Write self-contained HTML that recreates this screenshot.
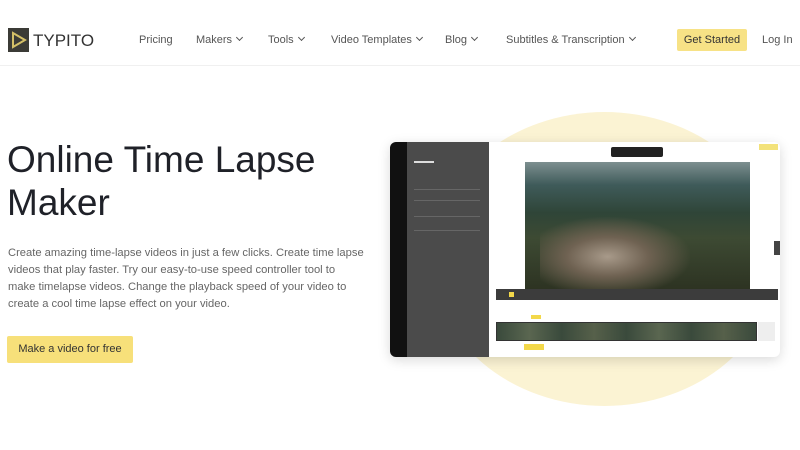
<!DOCTYPE html>
<html><head><meta charset="utf-8"><style>
*{margin:0;padding:0;box-sizing:border-box}
body{width:800px;height:450px;overflow:hidden;background:#fff;font-family:"Liberation Sans",sans-serif;position:relative}
.a{position:absolute}
.nav{font-size:11px;color:#555;top:34px}
.chev{display:inline-block;width:5px;height:5px;border-right:1.3px solid #555;border-bottom:1.3px solid #555;transform:rotate(45deg);margin-left:5px;position:relative;top:-3px}
</style></head><body>
<div class="a" style="left:0;top:0;width:800px;height:66px;border-bottom:1px solid #f0f0f0"></div>
<svg class="a" style="left:8px;top:28px" width="21" height="24"><rect width="21" height="24" fill="#3b3b36"/><path d="M5 5 L17 12 L5 19 Z" fill="none" stroke="#d4c068" stroke-width="2"/></svg>
<div class="a" style="left:33px;top:31px;font-size:17px;color:#333">TYPITO</div>
<div class="a nav" style="left:139px">Pricing</div>
<div class="a nav" style="left:196px">Makers<span class="chev"></span></div>
<div class="a nav" style="left:268px">Tools<span class="chev"></span></div>
<div class="a nav" style="left:331px">Video Templates<span class="chev"></span></div>
<div class="a nav" style="left:445px">Blog<span class="chev"></span></div>
<div class="a nav" style="left:506px">Subtitles &amp; Transcription<span class="chev"></span></div>
<div class="a" style="left:677px;top:29px;width:70px;height:22px;background:#f7e286;border-radius:2px;font-size:11px;color:#333;text-align:center;line-height:22px">Get Started</div>
<div class="a" style="left:762px;top:34px;font-size:11px;color:#555">Log In</div>

<div class="a" style="left:7px;top:138px;font-size:37px;line-height:43px;color:#1f2128">Online Time Lapse<br>Maker</div>
<div class="a" style="left:8px;top:245px;width:380px;font-size:11.2px;line-height:17px;color:#666;white-space:nowrap">Create amazing time-lapse videos in just a few clicks. Create time lapse<br>videos that play faster. Try our easy-to-use speed controller tool to<br>make timelapse videos. Change the playback speed of your video to<br>create a cool time lapse effect on your video.</div>
<div class="a" style="left:7px;top:336px;width:126px;height:27px;background:#f7e07a;border-radius:2px;font-size:11px;color:#333;text-align:center;line-height:27px">Make a video for free</div>

<div class="a" style="left:432px;top:112px;width:345px;height:294px;border-radius:50%;background:#fbf3d3"></div>
<div class="a" style="left:390px;top:142px;width:390px;height:215px;background:#fff;border-radius:6px;box-shadow:0 3px 12px rgba(0,0,0,.15);overflow:hidden">
 <div class="a" style="left:0;top:0;width:17px;height:215px;background:#111"></div>
 <div class="a" style="left:17px;top:0;width:82px;height:215px;background:#4b4b4b"></div>
 <div class="a" style="left:24px;top:19px;width:20px;height:2px;background:#ddd"></div>
 <div class="a" style="left:24px;top:47px;width:66px;height:1px;background:#666"></div>
 <div class="a" style="left:24px;top:58px;width:66px;height:1px;background:#666"></div>
 <div class="a" style="left:24px;top:74px;width:66px;height:1px;background:#666"></div>
 <div class="a" style="left:24px;top:88px;width:66px;height:1px;background:#666"></div>
 <div class="a" style="left:221px;top:5px;width:52px;height:10px;background:#222;border-radius:2px"></div>
 <div class="a" style="left:369px;top:2px;width:19px;height:6px;background:#f3e27a"></div>
 <div class="a" style="left:135px;top:20px;width:225px;height:127px;background:linear-gradient(180deg,#7d8f90 0%,#3f5b5a 18%,#2f4538 40%,#3d4a33 60%,#2d3322 100%)"></div>
 <div class="a" style="left:150px;top:75px;width:150px;height:72px;background:radial-gradient(ellipse at 45% 55%,#a89a8a 0%,#6f6252 35%,rgba(50,50,35,0) 72%)"></div>
 <div class="a" style="left:106px;top:147px;width:282px;height:11px;background:#3c3c3c"></div>
 <div class="a" style="left:119px;top:150px;width:5px;height:5px;background:#f3d84a"></div>
 <div class="a" style="left:106px;top:180px;width:261px;height:19px;background:linear-gradient(90deg,#3a4a3c,#5a6650,#3a4a3c,#56604a,#3a4a3c,#5a6650,#3a4a3c,#56604a,#3a4a3c);border:1px solid #333"></div>
 <div class="a" style="left:368px;top:180px;width:17px;height:19px;background:#eee"></div>
 <div class="a" style="left:141px;top:173px;width:10px;height:4px;background:#f3d84a"></div>
 <div class="a" style="left:134px;top:202px;width:20px;height:6px;background:#f3d84a"></div>
 <div class="a" style="left:384px;top:99px;width:6px;height:14px;background:#444"></div>
</div>
</body></html>
